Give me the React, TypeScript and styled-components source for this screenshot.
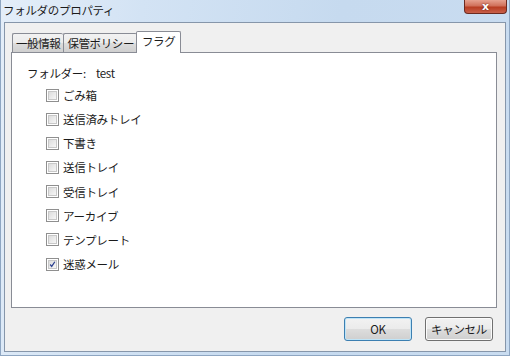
import React from "react";
import styled, { createGlobalStyle } from "styled-components";

const Global = createGlobalStyle`
  html, body { margin: 0; padding: 0; background: #cfdff0; }
  body { width: 510px; height: 356px; overflow: hidden; font-family: "Noto Sans CJK JP", "Noto Sans", sans-serif; }
`;

const Window = styled.div`
  width: 510px;
  height: 356px;
  box-sizing: border-box;
  display: flex;
  flex-direction: column;
  background: linear-gradient(100deg, #e4eef9 0%, #d3e3f4 25%, #c6daef 60%, #c9dcf0 100%);
  border-left: 1px solid #8ea6c2;
  border-right: 1px solid #8ea6c2;
  border-bottom: 1px solid #8ea6c2;
`;

const TitleBar = styled.div`
  height: 22px;
  flex: none;
  display: flex;
  align-items: flex-start;
  justify-content: space-between;
  padding-left: 2px;
`;

const Title = styled.div`
  font-size: 11.5px;
  line-height: 20px;
  color: #1b1b1b;
  letter-spacing: -0.3px;
`;

const CloseButton = styled.div`
  width: 43px;
  height: 14px;
  margin-right: 2px;
  box-sizing: border-box;
  border: 1px solid #6b2a20;
  border-top: none;
  border-radius: 0 0 4px 4px;
  background: linear-gradient(180deg, #e6a18f 0%, #d0705a 45%, #b83d22 55%, #c8604a 100%);
  display: flex;
  align-items: center;
  justify-content: center;
  color: #fff;
  font-family: "DejaVu Sans", sans-serif;
  font-weight: bold;
  font-size: 11px;
  line-height: 12px;
  text-shadow: 0 0 2px #5a1a10;
`;

const Client = styled.div`
  flex: 1;
  margin: 0 3px 3px 3px;
  background: #f0f0f0;
  border: 1px solid #8696aa;
  display: flex;
  flex-direction: column;
  padding: 8px 8px 0 6px;
`;

const TabStrip = styled.div`
  display: flex;
  align-items: flex-end;
  height: 22px;
  padding-left: 1px;
  position: relative;
  z-index: 1;
  margin-bottom: -1px;
`;

const Tab = styled.div<{ $active?: boolean }>`
  box-sizing: border-box;
  height: ${(p) => (p.$active ? "22px" : "20px")};
  padding: 0 ${(p) => (p.$active ? "5px" : "3px")};
  margin-left: ${(p) => (p.$active ? "-1px" : "0")};
  margin-right: ${(p) => (p.$active ? "-1px" : "0")};
  border: 1px solid #898c95;
  border-bottom: ${(p) => (p.$active ? "none" : "1px solid #898c95")};
  border-right: ${(p) => (p.$active ? "1px solid #898c95" : "none")};
  border-radius: 2px 2px 0 0;
  background: ${(p) =>
    p.$active ? "#ffffff" : "linear-gradient(180deg, #f2f2f2 0%, #ebebeb 50%, #dddddd 51%, #cfcfcf 100%)"};
  font-size: 11.5px;
  letter-spacing: -0.4px;
  line-height: ${(p) => (p.$active ? "19px" : "18px")};
  color: #1b1b1b;
  position: relative;
  z-index: ${(p) => (p.$active ? 2 : 1)};
  &:last-child { border-right: 1px solid #898c95; }
`;

const Panel = styled.div`
  height: 256px;
  box-sizing: border-box;
  background: #fff;
  border: 1px solid #898c95;
  padding: 12px 0 0 15px;
  display: flex;
  flex-direction: column;
`;

const FolderLine = styled.div`
  font-size: 11.5px;
  line-height: 16px;
  color: #1b1b1b;
  display: flex;
  gap: 10px;
  margin-bottom: 2px;
  letter-spacing: -0.3px;
`;

const CheckList = styled.div`
  display: flex;
  flex-direction: column;
  padding-left: 19px;
`;

const Row = styled.label`
  height: 24.15px;
  display: flex;
  align-items: center;
  gap: 4px;
  font-size: 11.5px;
  color: #1b1b1b;
  letter-spacing: -0.3px;
`;

const Box = styled.span`
  width: 13px;
  height: 13px;
  box-sizing: border-box;
  border: 1px solid #8f8f8f;
  background: #fff;
  display: flex;
  align-items: center;
  justify-content: center;
  flex: none;
`;

const BoxInner = styled.span`
  width: 9px;
  height: 9px;
  box-sizing: border-box;
  border: 1px solid #c8c8c8;
  background: linear-gradient(135deg, #dcdcdc 0%, #ececec 60%, #f6f6f6 100%);
  display: flex;
  align-items: center;
  justify-content: center;
`;

const Footer = styled.div`
  display: flex;
  justify-content: flex-end;
  gap: 13px;
  padding: 9px 4px 0 0;
`;

const Button = styled.button<{ $default?: boolean }>`
  width: 68px;
  height: 24px;
  box-sizing: border-box;
  border: 1px solid ${(p) => (p.$default ? "#3c7fb1" : "#707070")};
  border-radius: 3px;
  background: linear-gradient(180deg, #f2f2f2 0%, #ebebeb 49%, #dddddd 50%, #cfcfcf 100%);
  box-shadow: inset 0 0 0 1px ${(p) => (p.$default ? "#bfe4f7" : "#fbfbfb")};
  font-family: "Noto Sans CJK JP", "Noto Sans", sans-serif;
  font-size: 11.5px;
  color: #1b1b1b;
  padding: 0;
  letter-spacing: -0.3px;
`;

const Check = () => (
  <svg width="9" height="9" viewBox="0 0 9 9">
    <path d="M1.5 4.5 L3.5 7 L7.5 1" fill="none" stroke="#2a3f8f" strokeWidth="1.6" />
  </svg>
);

const items: { label: string; checked?: boolean }[] = [
  { label: "ごみ箱" },
  { label: "送信済みトレイ" },
  { label: "下書き" },
  { label: "送信トレイ" },
  { label: "受信トレイ" },
  { label: "アーカイブ" },
  { label: "テンプレート" },
  { label: "迷惑メール", checked: true },
];

export default function App() {
  return (
    <>
      <Global />
      <Window>
        <TitleBar>
          <Title>フォルダのプロパティ</Title>
          <CloseButton>x</CloseButton>
        </TitleBar>
        <Client>
          <TabStrip>
            <Tab>一般情報</Tab>
            <Tab>保管ポリシー</Tab>
            <Tab $active>フラグ</Tab>
          </TabStrip>
          <Panel>
            <FolderLine>
              <span>フォルダー:</span>
              <span>test</span>
            </FolderLine>
            <CheckList>
              {items.map((it) => (
                <Row key={it.label}>
                  <Box>
                    <BoxInner>{it.checked && <Check />}</BoxInner>
                  </Box>
                  {it.label}
                </Row>
              ))}
            </CheckList>
          </Panel>
          <Footer>
            <Button $default>OK</Button>
            <Button>キャンセル</Button>
          </Footer>
        </Client>
      </Window>
    </>
  );
}
